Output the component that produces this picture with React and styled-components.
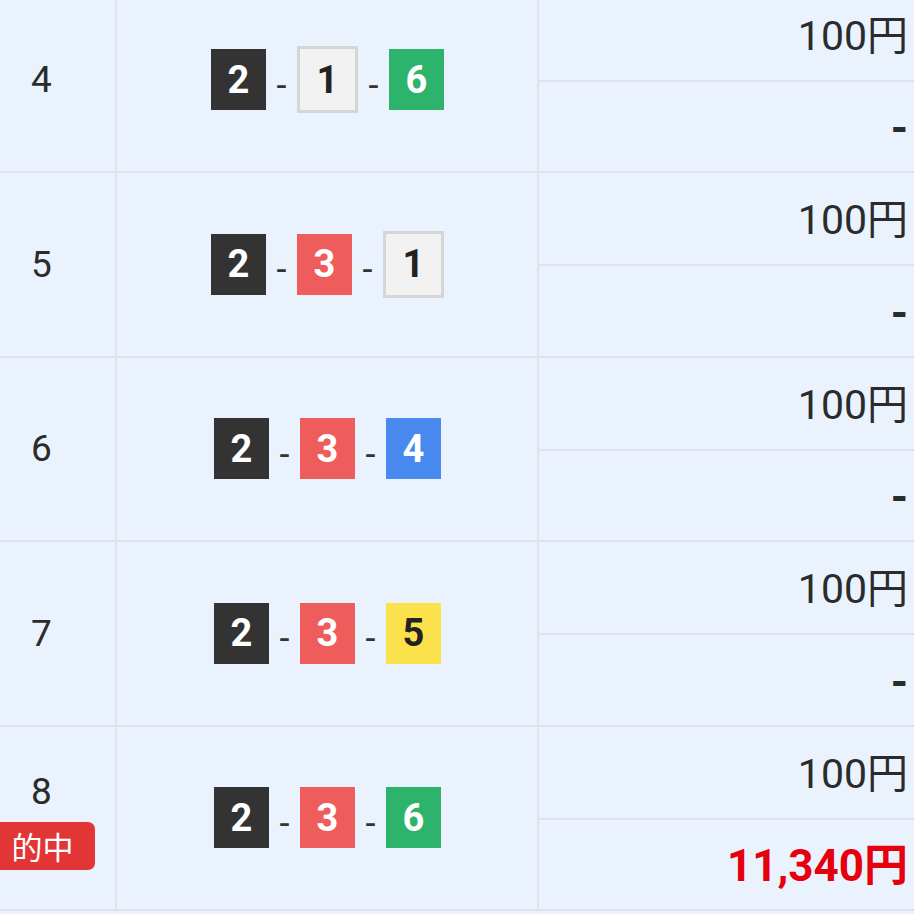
import React from "react";
import styled, { createGlobalStyle } from "styled-components";

const GlobalStyle = createGlobalStyle`
  html, body { margin: 0; padding: 0; background: #eaf2fd; }
  * { box-sizing: border-box; }
`;

const Viewport = styled.div`
  width: 914px;
  height: 914px;
  overflow: hidden;
  background: #eaf2fd;
  font-family: Roboto, "Noto Sans CJK JP", sans-serif;
  color: #2b2b2b;
`;

const Table = styled.div`
  width: 956px;
  margin-left: -32px;
  margin-top: -11.5px;
  display: flex;
  flex-direction: column;
`;

const Row = styled.div`
  display: grid;
  grid-template-columns: 149px 422px 1fr;
  height: 184.5px;
  border-bottom: 2px solid #dfe3e9;
`;

const NoCell = styled.div`
  border-right: 2px solid #dfe3e9;
  display: flex;
  flex-direction: column;
  align-items: center;
  justify-content: center;
  font-size: 37px;
  line-height: 1;
  color: #2b2b2b;
  padding-top: ${(p) => (p.$hit ? "8px" : "0")};
`;

const HitBadge = styled.span`
  margin-top: 12px;
  width: 105px;
  height: 48px;
  border-radius: 7px;
  background: #e23535;
  color: #fff;
  font-family: "Noto Sans CJK JP", sans-serif;
  font-size: 31px;
  line-height: 48px;
  text-align: center;
  margin-left: 2px;
`;

const ComboCell = styled.div`
  border-right: 2px solid #dfe3e9;
  display: flex;
  align-items: center;
  justify-content: center;
  padding-left: 1px;
`;

const boatColors = {
  1: { bg: "#f2f2f2", fg: "#222", border: "#d5d5d5" },
  2: { bg: "#333333", fg: "#ffffff" },
  3: { bg: "#ef5c5c", fg: "#ffffff" },
  4: { bg: "#4789ee", fg: "#ffffff" },
  5: { bg: "#fbe14b", fg: "#222" },
  6: { bg: "#2db36b", fg: "#ffffff" },
};

const Boat = styled.span`
  width: 55px;
  height: 61px;
  box-sizing: content-box;
  display: inline-flex;
  align-items: center;
  justify-content: center;
  background: ${(p) => boatColors[p.$n].bg};
  color: ${(p) => boatColors[p.$n].fg};
  border: ${(p) => (boatColors[p.$n].border ? `3px solid ${boatColors[p.$n].border}` : "none")};
  margin: ${(p) => (boatColors[p.$n].border ? "-3px 0" : "0")};
  font-weight: 700;
  font-size: 38px;
  line-height: 1;
`;

const Dash = styled.span`
  width: 31px;
  text-align: center;
  font-size: 36px;
  line-height: 1;
  color: #333;
  padding-top: 12px;
`;

const AmountCell = styled.div`
  display: grid;
  grid-template-rows: 1fr 1fr;
`;

const AmountLine = styled.div`
  display: flex;
  align-items: center;
  justify-content: flex-end;
  padding-right: 16px;
  padding-top: 4px;
  font-size: ${(p) => (p.$strong ? "44px" : "41px")};
  font-weight: ${(p) => (p.$strong ? 700 : 400)};
  color: ${(p) => (p.$red ? "#e6000e" : "#2b2b2b")};
  line-height: 1;
  border-top: ${(p) => (p.$divider ? "2px solid #dfe3e9" : "none")};
`;

const rows = [
  { no: 4, combo: [2, 1, 6], amount: "100円", payout: "-" },
  { no: 5, combo: [2, 3, 1], amount: "100円", payout: "-" },
  { no: 6, combo: [2, 3, 4], amount: "100円", payout: "-" },
  { no: 7, combo: [2, 3, 5], amount: "100円", payout: "-" },
  { no: 8, combo: [2, 3, 6], amount: "100円", payout: "11,340円", hit: true },
];

export default function App() {
  return (
    <>
      <GlobalStyle />
      <Viewport>
        <Table>
          {rows.map((r) => (
            <Row key={r.no}>
              <NoCell $hit={r.hit}>
                <span>{r.no}</span>
                {r.hit && <HitBadge>的中</HitBadge>}
              </NoCell>
              <ComboCell>
                {r.combo.map((n, i) => (
                  <React.Fragment key={i}>
                    {i > 0 && <Dash>-</Dash>}
                    <Boat $n={n}>{n}</Boat>
                  </React.Fragment>
                ))}
              </ComboCell>
              <AmountCell>
                <AmountLine>{r.amount}</AmountLine>
                <AmountLine $divider $strong $red={r.hit}>
                  {r.payout}
                </AmountLine>
              </AmountCell>
            </Row>
          ))}
        </Table>
      </Viewport>
    </>
  );
}
